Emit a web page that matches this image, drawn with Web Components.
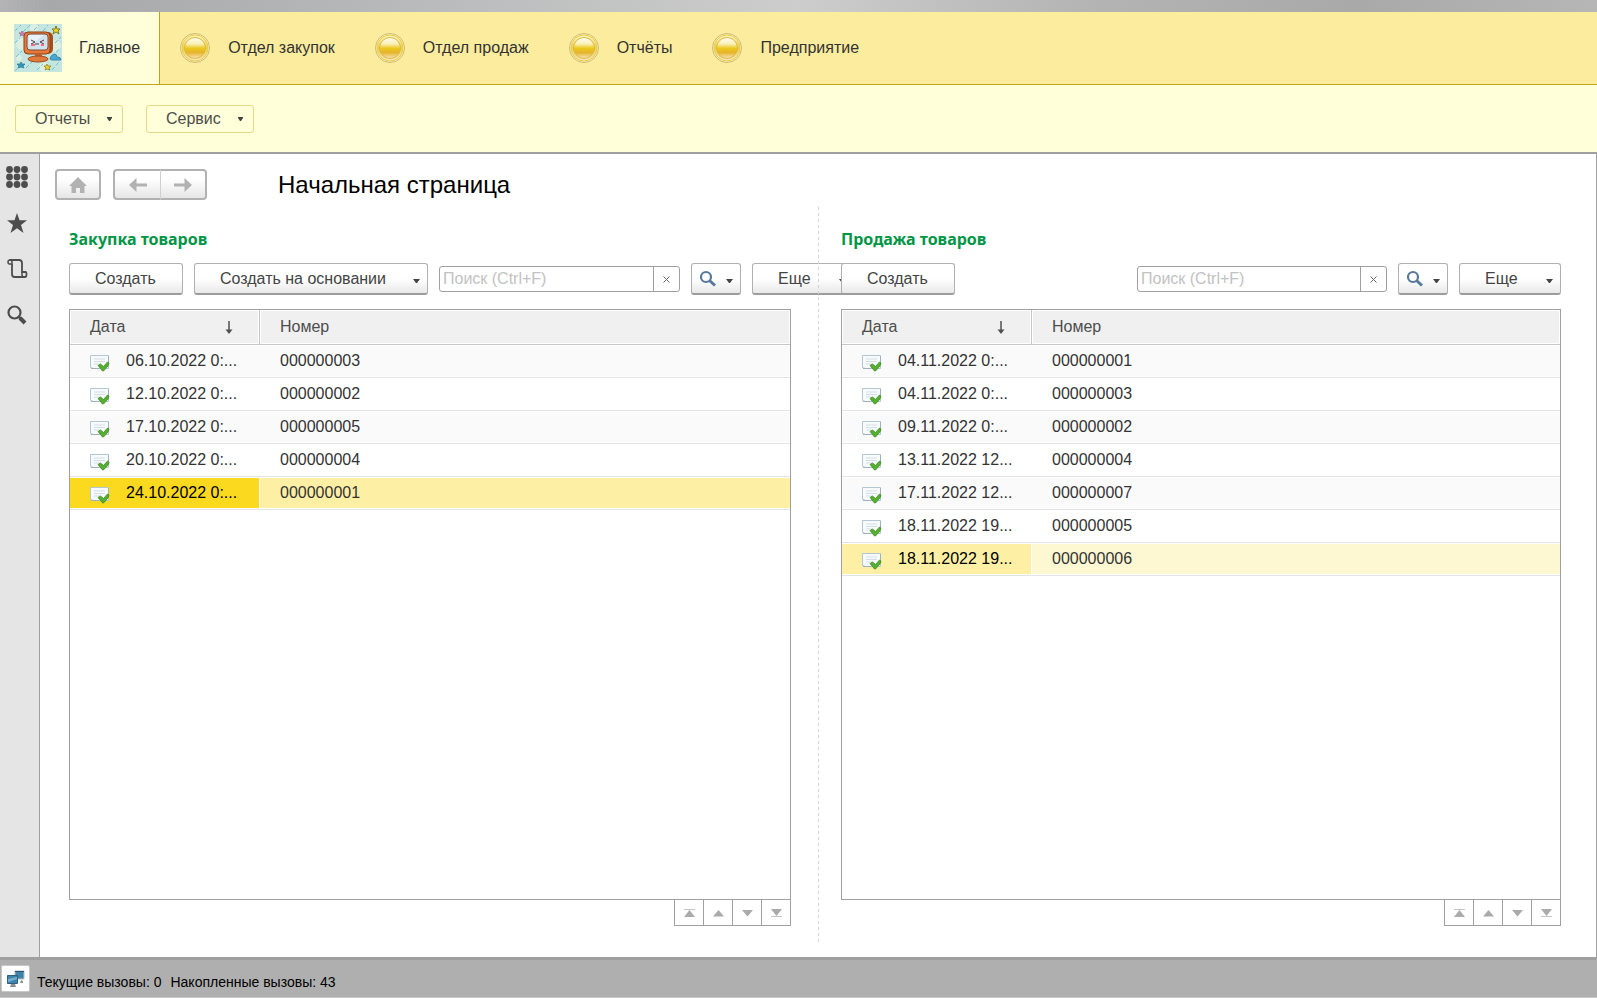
<!DOCTYPE html>
<html lang="ru">
<head>
<meta charset="utf-8">
<title>Начальная страница</title>
<style>
html, body { margin: 0; height: 100%; }
body { font-family: "Liberation Sans", Arial, sans-serif; font-size: 16px; color: #333; background: #fff; }
</style>
</head>
<body>
<app-shell></app-shell>
<script>
const ICONS = {
  logo: `<svg width="48" height="48" viewBox="0 0 48 48"><rect width="48" height="48" fill="#c4e6df"/><g fill="#dcefe0"><circle cx="8" cy="20" r="6"/><circle cx="41" cy="22" r="6"/><circle cx="20" cy="4" r="4"/><circle cx="30" cy="43" r="5"/><circle cx="5" cy="34" r="3"/></g><g stroke="#6fbfe0" stroke-width="1" stroke-dasharray="4 2"><path d="M1 7l6-6M9 8l7-7M20 6l5-5M29 7l5-6M1 19l5-5M41 19l6-6M2 33l6-6M12 44l8-8M23 46l6-6M38 46l7-8M42 28l5-4M1 47l4-4M36 14l4-4"/></g><rect x="11" y="8" width="28" height="22" rx="5" fill="#a8501c"/><rect x="10" y="8" width="26" height="22" rx="4" fill="#e8783a" stroke="#8a4218"/><rect x="13" y="10" width="21" height="16" rx="3" fill="#d3e3ee" stroke="#7c5136"/><path d="M15 11h15L15 22z" fill="#e8f2f7"/><path d="M17 16l4 2-4 2M30 16l-4 2 4 2M21 20h4" stroke="#49414b" fill="none"/><path d="M17 21h4M27 21h3" stroke="#ee7284" stroke-width="2"/><path d="M21 30h7v4h-7z" fill="#c9602a"/><ellipse cx="24" cy="35" rx="10" ry="3" fill="#e27a3d" stroke="#9a4c20"/><path d="M36 35q0-3 4-5 3 0 3 3 4 0 4 3H38z" fill="#49a8cf" stroke="#3b88aa"/><path id="s" d="M42 2l1 3 3 0-2 2 1 3-3-2-3 2 1-3-2-2 3 0z" fill="#f1d31b" stroke="#7b7a2e"/><path d="M33 40l1 2h3l-2 2 1 2-3-1-2 1 1-2-2-2h2z" fill="#f1d31b" stroke="#7b7a2e" stroke-width=".7"/><path d="M7 38l1 2h3l-2 2 1 2-3-1-3 1 1-2-2-2h3z" fill="#2d99b8" stroke="#2a7890" stroke-width=".7"/><path d="M8 7l1 2h2l-2 1 1 2-2-1-2 1 1-2-2-1h2z" fill="#e77bb0" stroke="#98628a" stroke-width=".7"/></svg>`,
  orb: `<svg width="32" height="32" viewBox="0 0 32 32"><defs><linearGradient id="a" x2="0" y2="1"><stop offset="0" stop-color="#fff8c4"/><stop offset=".5" stop-color="#f0d040"/><stop offset="1" stop-color="#fbe9c0"/></linearGradient><linearGradient id="b" x2="0" y2="1"><stop offset="0" stop-color="#fffef2"/><stop offset=".3" stop-color="#faf0b8"/><stop offset=".52" stop-color="#ecc81c"/><stop offset=".72" stop-color="#e6b42c"/><stop offset="1" stop-color="#f9e6bc"/></linearGradient></defs><circle cx="16" cy="16" r="14.5" fill="#fdf3bc" stroke="#cdb878"/><circle cx="16" cy="16" r="13" fill="url(#a)" stroke="#e8cd44"/><circle cx="16" cy="16" r="10.5" fill="url(#b)" stroke="#d9b84e"/></svg>`,
  grid: `<svg width="22" height="22" viewBox="0 0 22 22" fill="#4d4d4d">${[3.5,11,18.5].map(y => [3.5,11,18.5].map(x => `<circle cx="${x}" cy="${y}" r="3.4"/>`).join('')).join('')}</svg>`,
  star: `<svg width="22" height="22" viewBox="0 0 22 22" fill="#4d4d4d"><path d="M11 1l2.5 7.200H21l-6 4.800L17.500 21 11 16.200 4.500 21 7 13 1 8.200h7.500z"/></svg>`,
  scroll: `<svg width="22" height="22" viewBox="0 0 22 22" fill="none" stroke="#4d4d4d" stroke-width="1.800"><path d="M3.500 2H13q3 0 3 3v9h3.500q1 0 1 2.500T19 19H8.500Q6 19 6 16V6"/><path d="M6 6H3.500Q2 6 2 4t2-2q2 0 2 2zM16 14v2.500q0 2.500 2 2.500" stroke-width="1.500"/></svg>`,
  find: `<svg width="22" height="22" viewBox="0 0 22 22" fill="none" stroke="#4d4d4d"><circle cx="8.500" cy="8.500" r="6" stroke-width="2.200"/><path d="M12.500 12.500l2 2" stroke-width="2.500"/><path d="M14 14l5 5" stroke-width="4"/></svg>`,
  lens: `<svg width="18" height="18" viewBox="0 0 18 18" fill="none" stroke="#55789c"><circle cx="7" cy="7" r="5" stroke-width="2.200"/><path d="M10.500 10.500l5.500 5" stroke-width="3"/></svg>`,
  home: `<svg width="20" height="16" viewBox="0 0 20 16" fill="#b2b2b2"><path d="M10 0l9 9h-2.500v7H12v-5H8v5H3.500V9H1z"/></svg>`,
  back: `<svg width="18" height="14" viewBox="0 0 18 14" fill="#b2b2b2"><path d="M0 7l7.500-7v5.500H18v3H7.500V14z"/></svg>`,
  forward: `<svg width="18" height="14" viewBox="0 0 18 14" fill="#b2b2b2"><path d="M18 7l-7.500-7v5.500H0v3h10.500V14z"/></svg>`,
  caret: `<svg width="7" height="4" viewBox="0 0 7 4"><path d="M0 0h7L4 4H3z" fill="#444"/></svg>`,
  smallCaret: `<svg width="5" height="4" viewBox="0 0 5 4"><path d="M0 0h5v1L3 4H2L0 1z" fill="#444"/></svg>`,
  cross: `<svg width="7" height="7" viewBox="0 0 7 7"><path d="M.5.5l6 6m0-6l-6 6" stroke="#666"/></svg>`,
  sort: `<svg width="8" height="13" viewBox="0 0 8 13"><path d="M4 0v11" stroke="#505050" stroke-width="1.500"/><path d="M.5 8.500h7L4 13z" fill="#505050"/></svg>`,
  posted: `<svg width="20" height="18" viewBox="0 0 20 18"><path d="M.5 1.500h18v13H3.500l-3-1z" fill="#f8fbfd" stroke="#b4c6d4"/><path d="M1 14.500h8M18.500 2v6" stroke="#9fb0bf"/><path d="M4 5h11M4 7.500h11M4 10h6" stroke="#d3dfe8"/><path d="M8 11.500l2.500-1.500 3 2.500 4-4.500L19 9l-1 3-4.500 5h-1z" fill="#55b030" stroke="#3d8c26" stroke-width=".8"/></svg>`,
  first: `<svg width="11" height="8" viewBox="0 0 11 8"><path d="M0 .5h11" stroke="#c4c4c4"/><path d="M5.500 1L11 8H0z" fill="#aaa"/></svg>`,
  prev: `<svg width="11" height="8" viewBox="0 0 11 8"><path d="M5.500 1L11 7.500H0z" fill="#aaa"/></svg>`,
  next: `<svg width="11" height="8" viewBox="0 0 11 8"><path d="M5.500 7.500L11 1H0z" fill="#aaa"/></svg>`,
  last: `<svg width="11" height="8" viewBox="0 0 11 8"><path d="M0 7.500h11" stroke="#c4c4c4"/><path d="M5.500 7L11 0H0z" fill="#aaa"/></svg>`,
  computers: `<svg width="18" height="18" viewBox="0 0 18 18"><path d="M8 1h9v8H8z" fill="#3f83a8" stroke="#b4bec4"/><path d="M8 1.500h9" stroke="#29566f"/><path d="M14 10l2 1v2h-3z" fill="#8d979c"/><path d="M.5 5.500h10v8H.5z" fill="#3b86b0" stroke="#2f5f7d"/><path d="M1 9l9-2v2l-9 3z" fill="#78b0cd"/><path d="M4 14h4l1 3H3z" fill="#8a9296"/></svg>`
};

class BaseElement extends HTMLElement {
  connectedCallback() {
    if (this.shadowRoot) return;
    const root = this.attachShadow({ mode: 'open' });
    root.innerHTML = `<style>*{box-sizing:border-box}svg{display:block;flex:none}button,input{font:inherit;color:inherit;margin:0}${this.css()}</style>${this.html()}`;
  }
}

customElements.define('section-tab', class extends BaseElement {
  css() { return `
    :host { display: block; }
    a { display: flex; align-items: center; height: 72px; gap: 17px; padding: 0 20px 0 19px; color: #333; text-decoration: none; white-space: nowrap; }
    :host([active]) a { background: #ffffd9; border-right: 1px solid #bca414; padding: 0 19px 0 14px; }`; }
  html() { return `<a href="#">${ICONS[this.getAttribute('icon')]}<slot></slot></a>`; }
});

customElements.define('command-menu', class extends BaseElement {
  css() { return `
    :host { display: block; }
    button { display: flex; align-items: center; justify-content: space-between; width: 108px; height: 28px; padding: 0 10px 0 19px; color: #4d4d4d; background: #ffffd9; border: 1px solid #e6d884; border-radius: 3px; }`; }
  html() { return `<button type="button" aria-haspopup="menu"><slot></slot>${ICONS.smallCaret}</button>`; }
});

customElements.define('tool-button', class extends BaseElement {
  css() { return `
    :host { display: block; flex: none; }
    button { display: flex; align-items: center; width: 100%; height: 32px; padding: 0 7px 0 25px; color: #444; white-space: nowrap; background: linear-gradient(#fff 50%, #e9e9e9); border: 1px solid #b0b0b0; border-bottom: 2px solid #9c9c9c; border-radius: 3px; }
    :host([icon]) button { padding-left: 7px; }
    button > svg:last-child { margin-left: auto; margin-top: 4px; }`; }
  html() {
    const icon = this.getAttribute('icon');
    return `<button type="button" ${icon ? 'aria-label="Найти"' : ''}>${icon ? ICONS[icon] : '<slot></slot>'}${this.hasAttribute('menu') ? ICONS.caret : ''}</button>`;
  }
});

customElements.define('search-field', class extends BaseElement {
  css() { return `
    :host { display: block; }
    div { display: flex; height: 26px; border: 1px solid #a0a0a0; border-radius: 3px; background: #fff; }
    input { flex: 1; min-width: 0; border: 0; padding: 0 3px; background: none; outline: 0; }
    input::placeholder { color: #c2c2c2; opacity: 1; }
    button { display: flex; align-items: center; justify-content: center; width: 26px; padding: 0; border: 0; border-left: 1px solid #a0a0a0; background: none; }`; }
  html() { return `<div><input type="text" aria-label="Поиск" placeholder="Поиск (Ctrl+F)"><button type="button" aria-label="Очистить">${ICONS.cross}</button></div>`; }
});

customElements.define('list-pager', class extends BaseElement {
  css() { return `
    :host { display: flex; border: solid #a0a0a0; border-width: 0 1px 1px 0; }
    button { display: flex; align-items: center; justify-content: center; width: 29px; height: 25px; padding: 0; background: #fff; border: 0; border-left: 1px solid #a0a0a0; }`; }
  html() {
    return [['first', 'В начало'], ['prev', 'Вверх'], ['next', 'Вниз'], ['last', 'В конец']]
      .map(([i, t]) => `<button type="button" aria-label="${t}">${ICONS[i]}</button>`).join('');
  }
});

customElements.define('document-table', class extends BaseElement {
  css() { return `
    :host { display: block; border: 1px solid #a0a0a0; background: #fff; }
    table { width: 100%; table-layout: fixed; border-collapse: separate; border-spacing: 0; }
    th, td { padding: 0 0 0 20px; text-align: left; font-weight: normal; white-space: nowrap; }
    th { height: 35px; color: #4d4d4d; background: #f0f0f0; border-bottom: 1px solid #c8c8c8; box-shadow: inset 0 0 0 1px #fff; }
    th:first-child { width: 190px; border-right: 1px solid #c8c8c8; }
    td { height: 33px; border-bottom: 1px solid #e4e4e4; box-shadow: inset 0 1px #fff, inset 0 -1px #fff; }
    tr:nth-child(odd) td { background: #fafafa; }
    .date { display: flex; align-items: center; gap: 16px; }
    .date svg { margin-top: 3px; }
    .head { display: flex; align-items: center; justify-content: space-between; padding-right: 26px; }
    tr.selected td { background: var(--row-mark, #fdf0a5); }
    tr.selected td:first-child { color: #000; background: var(--cell-mark, #fbd91e); border-right: 1px solid #fff; }`; }
  html() {
    const rows = this.getAttribute('rows').split(';').map(r => r.split('|'));
    return `<table><thead><tr><th scope="col"><div class="head"><span>Дата</span>${ICONS.sort}</div></th><th scope="col">Номер</th></tr></thead><tbody>${
      rows.map(([d, n], i) => `<tr${i === rows.length - 1 ? ' class="selected"' : ''}><td><div class="date">${ICONS.posted}<span>${d}</span></div></td><td>${n}</td></tr>`).join('')
    }</tbody></table>`;
  }
});

customElements.define('journal-panel', class extends BaseElement {
  css() { return `
    :host { display: flex; flex-direction: column; padding: 22px 0 16px; min-width: 0; }
    h2 { margin: 0 0 14px; font: bold 16px/20px "Noto Sans", sans-serif; color: #009646; }
    .tools { display: flex; align-items: center; gap: 11px; margin-bottom: 14px; }
    .create { width: 114px; }
    .based { width: 234px; }
    .find { width: 50px; }
    .more { width: 102px; }
    search-field { flex: 1; max-width: 250px; margin-left: auto; }
    document-table { flex: 1; }
    list-pager { align-self: flex-end; }`; }
  html() { return `
    <h2>${this.getAttribute('heading')}</h2>
    <div class="tools">
      <tool-button class="create">Создать</tool-button>
      ${this.hasAttribute('based') ? '<tool-button class="based" menu>Создать на основании</tool-button>' : ''}
      <search-field></search-field>
      <tool-button class="find" icon="lens" menu></tool-button>
      <tool-button class="more" menu>Еще</tool-button>
    </div>
    <document-table rows="${this.getAttribute('rows')}"></document-table>
    <list-pager></list-pager>`; }
});

customElements.define('side-rail', class extends BaseElement {
  css() { return `
    :host { display: flex; flex-direction: column; gap: 24px; width: 40px; padding: 12px 0 0 6px; background: #e5e5e5; border-right: 1px solid #a0a0a0; box-sizing: border-box; flex: none; }
    button { display: block; width: 22px; height: 22px; padding: 0; border: 0; background: none; }`; }
  html() {
    return [['grid', 'Меню функций'], ['star', 'Избранное'], ['scroll', 'История'], ['find', 'Поиск']]
      .map(([i, t]) => `<button type="button" aria-label="${t}">${ICONS[i]}</button>`).join('');
  }
});

customElements.define('page-toolbar', class extends BaseElement {
  css() { return `
    :host { display: flex; align-items: center; height: 31px; }
    button { display: flex; align-items: center; justify-content: center; width: 46px; height: 31px; padding: 0; border: 2px solid #b2b2b2; border-radius: 4px; background: linear-gradient(#fff 30%, #e6e6e6); }
    .pair { display: flex; margin: 0 71px 0 12px; }
    .pair button { width: 47px; border-right: 0; border-radius: 4px 0 0 4px; }
    .pair button + button { border: 2px solid #b2b2b2; border-left: 1px solid #d0d0d0; border-radius: 0 4px 4px 0; }
    h1 { margin: 0; font-size: 24px; line-height: 28px; font-weight: normal; color: #000; white-space: nowrap; }`; }
  html() { return `
    <button type="button" aria-label="Домой">${ICONS.home}</button>
    <div class="pair"><button type="button" aria-label="Назад">${ICONS.back}</button><button type="button" aria-label="Вперед">${ICONS.forward}</button></div>
    <h1><slot></slot></h1>`; }
});

customElements.define('status-bar', class extends BaseElement {
  css() { return `
    :host { display: flex; align-items: center; gap: 9px; height: 41px; padding: 0 0 0 1px; background: #afafaf; border-top: 3px solid #a0a0a0; border-bottom: 1px solid #c8c8c8; box-sizing: border-box; font-size: 14px; color: #000; flex: none; }
    button { display: flex; align-items: center; justify-content: center; width: 29px; height: 27px; padding: 0; margin-right: -2px; background: #fff; border: 1px solid #c8c8c8; border-radius: 2px; }
    span { padding-top: 6px; }`; }
  html() { return `<button type="button" aria-label="Соединение">${ICONS.computers}</button><span>Текущие вызовы: 0</span><span>Накопленные вызовы: 43</span>`; }
});

customElements.define('app-shell', class extends BaseElement {
  css() { return `
    :host { display: flex; flex-direction: column; min-height: 100vh; }
    .strip { height: 12px; flex: none; background: linear-gradient(90deg, #b4b4b6, #a7a8aa 3%, #b8b9ba 25%, #cdcdcd 50%, #b4b4b4 68%, #a9a9a9 85%, #b6b6b6); }
    .sections { display: flex; background: #fbec9e; border-bottom: 1px solid #bca414; }
    .commands { display: flex; gap: 23px; padding: 20px 15px 19px; background: #ffffd9; border-bottom: 2px solid #a0a0a0; }
    .work { display: flex; flex: 1; }
    main { display: flex; flex-direction: column; flex: 1; min-width: 0; padding: 15px 0 15px 15px; border-right: 1px solid #a0a0a0; }
    .panes { display: grid; grid-template-columns: 361fr 50px 360fr; flex: 1; margin: 7px 35px 0 14px; }
    .split { width: 1px; margin-left: 27px; background: repeating-linear-gradient(#d2d2d2 0 3px, transparent 3px 6px); }
    .idle { --cell-mark: #fdf0a5; --row-mark: #fdf7d2; }`; }
  html() { return `
    <div class="strip"></div>
    <nav class="sections">
      <section-tab icon="logo" active>Главное</section-tab>
      <section-tab icon="orb">Отдел закупок</section-tab>
      <section-tab icon="orb">Отдел продаж</section-tab>
      <section-tab icon="orb">Отчёты</section-tab>
      <section-tab icon="orb">Предприятие</section-tab>
    </nav>
    <div class="commands"><command-menu>Отчеты</command-menu><command-menu>Сервис</command-menu></div>
    <div class="work">
      <side-rail></side-rail>
      <main>
        <page-toolbar>Начальная страница</page-toolbar>
        <div class="panes">
          <journal-panel heading="Закупка товаров" based rows="06.10.2022 0:...|000000003;12.10.2022 0:...|000000002;17.10.2022 0:...|000000005;20.10.2022 0:...|000000004;24.10.2022 0:...|000000001"></journal-panel>
          <div class="split"></div>
          <journal-panel class="idle" heading="Продажа товаров" rows="04.11.2022 0:...|000000001;04.11.2022 0:...|000000003;09.11.2022 0:...|000000002;13.11.2022 12...|000000004;17.11.2022 12...|000000007;18.11.2022 19...|000000005;18.11.2022 19...|000000006"></journal-panel>
        </div>
      </main>
    </div>
    <status-bar></status-bar>`; }
});
</script>
</body>
</html>
